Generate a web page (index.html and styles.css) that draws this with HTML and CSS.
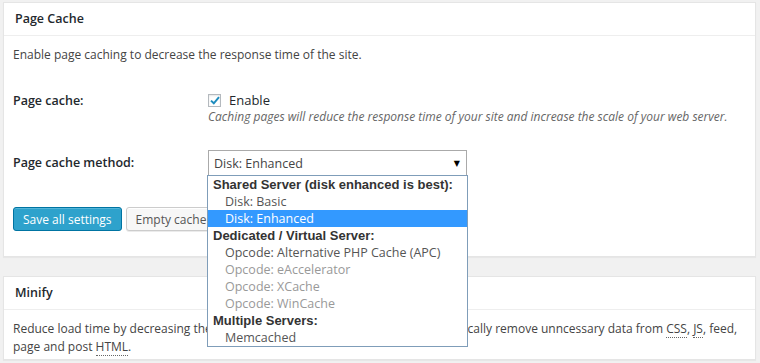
FILE: index.html
```html
<!DOCTYPE html>
<html lang="en">
	<head>
		<meta charset="UTF-8" />
		<title>Page Cache</title>
		<link rel="stylesheet" href="styles.css">
	</head>
	<body>
		<div class="postbox">
			<h3 class="hndle">Page Cache</h3>
			<div class="inside">
				<p class="intro">Enable page caching to decrease the response time of the site.</p>
				<div class="form-row row-enable">
					<div class="label">Page cache:</div>
					<div class="field">
						<label class="check">
							<span class="box">
								<svg width="10" height="9" viewBox="0 0 10 9"><path d="M1 4.6 L3.8 7.3 L9 1.2" fill="none" stroke="#1e8cbe" stroke-width="2"/></svg>
							</span>
							Enable
						</label>
						<p class="description">Caching pages will reduce the response time of your site and increase the scale of your web server.</p>
					</div>
				</div>
				<div class="form-row row-method">
					<div class="label">Page cache method:</div>
					<div class="field">
						<div class="select">
							<span>Disk: Enhanced</span>
							<span class="arrow">▼</span>
						</div>
						<ul class="dropdown">
							<li class="group">Shared Server (disk enhanced is best):</li>
							<li class="opt">Disk: Basic</li>
							<li class="opt selected">Disk: Enhanced</li>
							<li class="group">Dedicated / Virtual Server:</li>
							<li class="opt">Opcode: Alternative PHP Cache (APC)</li>
							<li class="opt disabled">Opcode: eAccelerator</li>
							<li class="opt disabled">Opcode: XCache</li>
							<li class="opt disabled">Opcode: WinCache</li>
							<li class="group">Multiple Servers:</li>
							<li class="opt">Memcached</li>
						</ul>
					</div>
				</div>
				<div class="buttons">
					<button class="button-primary">Save all settings</button>
					<button class="button">Empty cache</button>
				</div>
			</div>
		</div>

		<div class="postbox">
			<h3 class="hndle">Minify</h3>
			<div class="inside inside-last">
				<p class="intro">Reduce load time by decreasing the size and number of <abbr>CSS</abbr> and <abbr>JS</abbr> files. Automatically remove unncessary data from <abbr>CSS</abbr>, <abbr>JS</abbr>, feed, page and post <abbr>HTML</abbr>.</p>
			</div>
		</div>
	</body>
</html>
```

FILE: styles.css
```css
body {
	margin: 0;
	padding: 2px 4px 0 3px;
	background-color: #f1f1f1;
	font-family: "Open Sans", sans-serif;
	font-size: 12px;
	color: #444;
}

p {
	margin: 0;
}

.postbox {
	background-color: #fff;
	border: 1px solid #e5e5e5;
	box-shadow: 0 1px 1px rgba(0, 0, 0, 0.04);
	margin-bottom: 19px;
}

.hndle {
	margin: 0;
	height: 32px;
	line-height: 32px;
	padding-left: 11px;
	font-size: 12.5px;
	font-weight: 600;
	color: #23282d;
	border-bottom: 1px solid #eee;
}

.inside {
	padding: 10px 9px 0;
}

.inside-last {
	padding-bottom: 3px;
}

.intro {
	line-height: 18px;
}

.form-row {
	display: flex;
}

.label {
	width: 195px;
	font-size: 12.5px;
	font-weight: 600;
	color: #23282d;
}

.field {
	position: relative;
	flex: 1;
}

.row-enable {
	padding-top: 27px;
}

.row-enable .label {
	line-height: 20px;
}

.check {
	display: flex;
	align-items: center;
	gap: 8px;
	font-size: 13px;
	line-height: 18px;
	color: #23282d;
}

.box {
	width: 13px;
	height: 13px;
	border: 1px solid #b4b9be;
	box-sizing: border-box;
	display: flex;
	align-items: center;
	justify-content: center;
	box-shadow: inset 0 1px 2px rgba(0, 0, 0, 0.1);
}

.description {
	font-style: italic;
	color: #666;
	line-height: 16px;
}

.row-method {
	padding-top: 25px;
}

.row-method .label {
	line-height: 26px;
}

.select {
	width: 259px;
	height: 26px;
	box-sizing: border-box;
	border: 1px solid #aaa;
	display: flex;
	align-items: center;
	justify-content: space-between;
	padding: 0 6px 0 5px;
	font-size: 12.5px;
	color: #444;
}

.arrow {
	font-family: "DejaVu Sans", sans-serif;
	font-size: 8px;
	color: #000;
}

.dropdown {
	position: absolute;
	top: 25px;
	left: -1px;
	width: 259px;
	margin: 0;
	padding: 0;
	list-style: none;
	background-color: #fff;
	border: 1px solid #7f9db9;
	z-index: 2;
}

.dropdown li {
	height: 17px;
	line-height: 17px;
	white-space: nowrap;
}

.group {
	font-weight: 700;
	color: #333;
	padding-left: 5px;
	font-family: "Liberation Sans", sans-serif;
	font-size: 13px;
}

.opt {
	padding-left: 17px;
	font-size: 12.5px;
	color: #555;
}

.opt.selected {
	background-color: #3399ff;
	color: #fff;
}

.opt.disabled {
	color: #999;
}

.buttons {
	display: flex;
	gap: 4px;
	padding: 31px 0 25px;
}

button {
	height: 24px;
	padding: 0 9px;
	font-family: "Open Sans", sans-serif;
	font-size: 12px;
	border-radius: 3px;
	cursor: pointer;
}

.button-primary {
	background-color: #2ea2cc;
	border: 1px solid #0074a2;
	color: #fff;
	box-shadow: inset 0 1px 0 rgba(120, 200, 230, 0.5);
}

.button {
	background-color: #f7f7f7;
	border: 1px solid #ccc;
	color: #555;
	box-shadow: inset 0 1px 0 #fff, 0 1px 0 rgba(0, 0, 0, 0.08);
}

abbr {
	text-decoration: none;
	border-bottom: 1px dotted #666;
}
```
